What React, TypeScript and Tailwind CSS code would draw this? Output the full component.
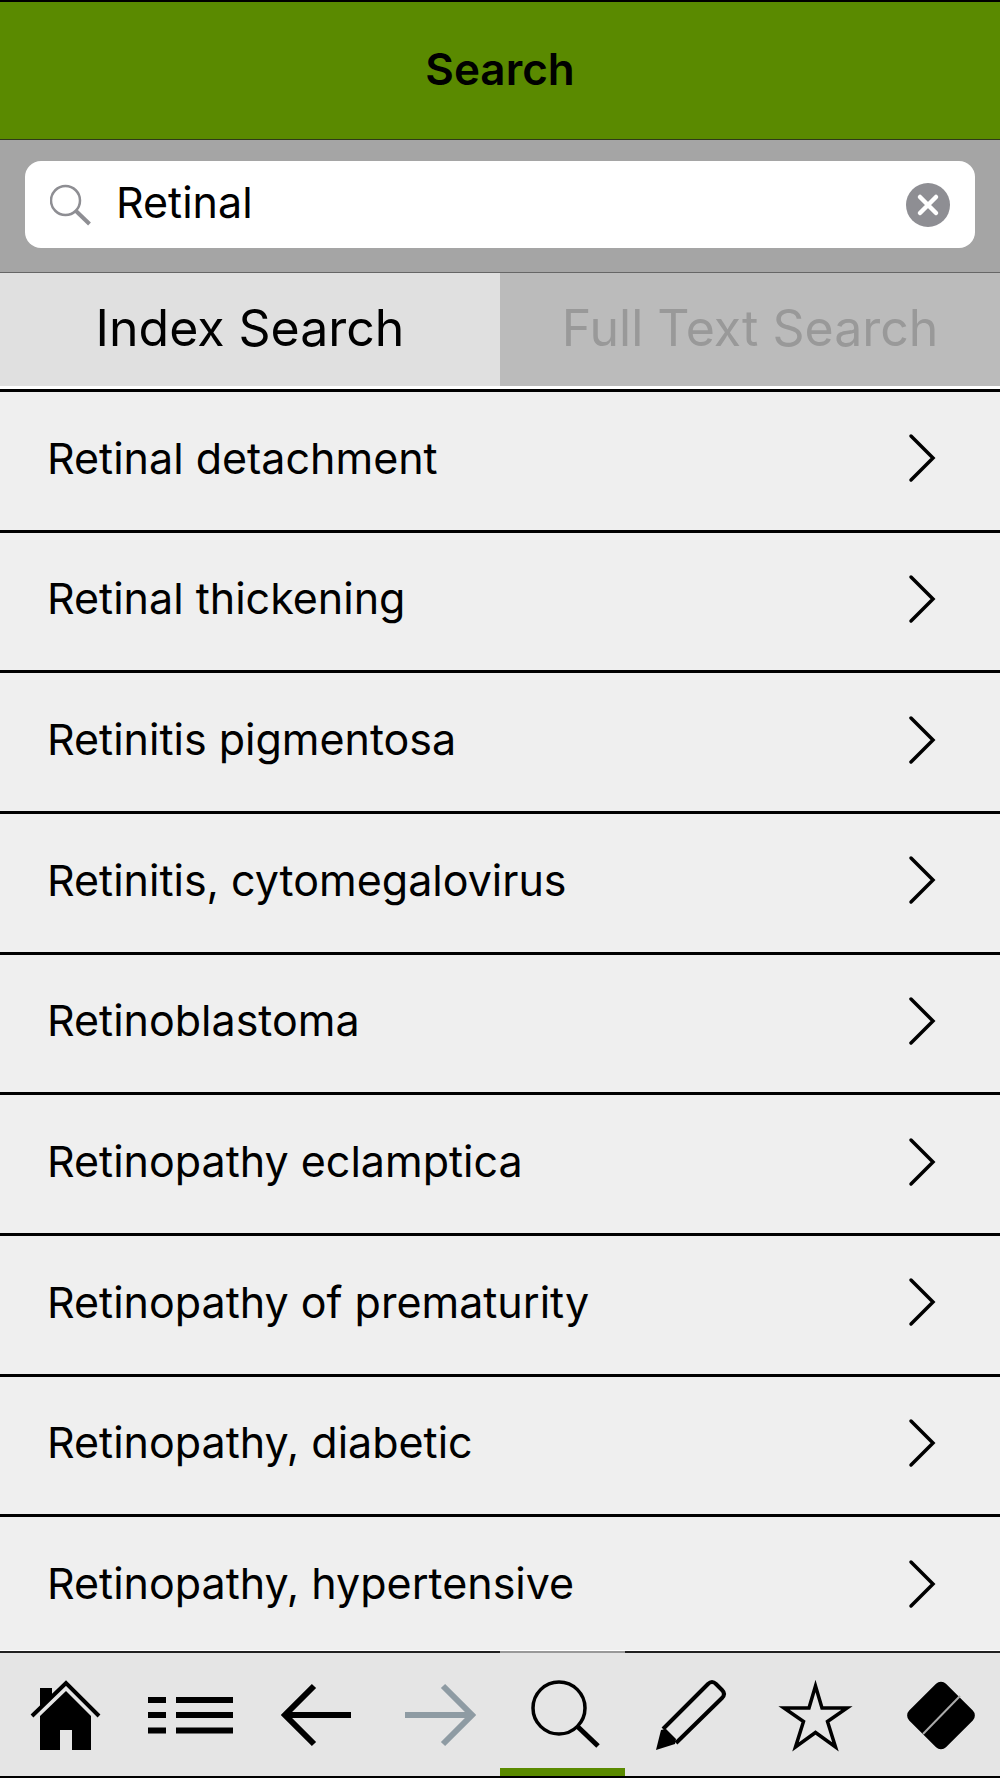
import { useState } from "react";
import type { ReactNode } from "react";

const results = [
  "Retinal detachment",
  "Retinal thickening",
  "Retinitis pigmentosa",
  "Retinitis, cytomegalovirus",
  "Retinoblastoma",
  "Retinopathy eclamptica",
  "Retinopathy of prematurity",
  "Retinopathy, diabetic",
  "Retinopathy, hypertensive"
];

type NavItem = { id: string; label: string; disabled?: boolean; icon: ReactNode };

// All nav icons are drawn on a 125x115 tile
const navItems: NavItem[] = [
  {
    id: "home",
    label: "Home",
    icon: (
      <>
        <path d="M40 35h12v7L40 54zM66 38l25 25v34H72V77H60v20H40V63z" fill="#000" />
        <path d="M32 63l34-33 33 33" stroke="#000" strokeWidth="4" />
      </>
    )
  },
  {
    id: "contents",
    label: "Contents",
    icon: <path d="M23 47h18M51 47h57M23 62h18M51 62h57M23 77.500h18M51 77.500h57" stroke="#000" strokeWidth="6" />
  },
  {
    id: "back",
    label: "Back",
    icon: <path d="M101 62H35M64 33L35 62l29 29" stroke="#000" strokeWidth="6" />
  },
  {
    id: "forward",
    label: "Forward",
    disabled: true,
    icon: <path d="M30 62h66M68 33l29 29-29 29" stroke="#8e9ba3" strokeWidth="6" />
  },
  {
    id: "search",
    label: "Search",
    icon: (
      <>
        <circle cx="59" cy="55" r="26" stroke="#000" strokeWidth="3.500" />
        <path d="M77 73l21 20" stroke="#000" strokeWidth="5" />
      </>
    )
  },
  {
    id: "notes",
    label: "Notes",
    icon: (
      <>
        <path d="M38 76L83 31q4-4 8 0l6 6q4 4 0 8L51 90" stroke="#000" strokeWidth="4" />
        <path d="M36 77l5-1 10 10-1 5-19 6z" fill="#000" />
      </>
    )
  },
  {
    id: "favorites",
    label: "Favorites",
    icon: (
      <path
        d="M65.500 33l6.500 22h25L77.500 68.500 85.500 94 65.500 79.500 45.500 94 53.500 68.500 34 55h25z"
        stroke="#000"
        strokeWidth="3.500"
      />
    )
  },
  {
    id: "erase",
    label: "Erase",
    icon: (
      <>
        <rect x="40" y="36.500" width="52" height="52" rx="7" transform="rotate(45 66 62.500)" fill="#000" />
        <path d="M85 43L48 81" stroke="#aaa" strokeWidth="2" />
      </>
    )
  }
];

function SearchField({ value, onChange }: { value: string; onChange: (value: string) => void }) {
  return (
    <div className="border-b border-[#666] bg-[#a5a5a5] px-[25px] pt-[21px] pb-6">
      <div className="flex h-[87px] items-center rounded-2xl bg-white px-[25px]">
        <svg viewBox="0 0 42 42" className="size-[42px] shrink-0" fill="none" stroke="#8e8e93" aria-hidden="true">
          <circle cx="15.500" cy="16.500" r="14.500" strokeWidth="2.500" />
          <path d="M26 27l13.500 13" strokeWidth="4" />
        </svg>
        <input
          type="text"
          aria-label="Search term"
          value={value}
          onChange={(event) => onChange(event.target.value)}
          className="ml-6 h-14 min-w-0 flex-1 bg-transparent pb-1 text-[43px] outline-none"
        />
        <button type="button" aria-label="Clear" onClick={() => onChange("")} className="shrink-0">
          <svg viewBox="0 0 44 44" className="size-11" fill="none" aria-hidden="true">
            <circle cx="22" cy="22" r="22" fill="#8e8e93" />
            <path d="M14 14l16 16M30 14L14 30" stroke="#fff" strokeWidth="4.500" strokeLinecap="round" />
          </svg>
        </button>
      </div>
    </div>
  );
}

export default function App() {
  const [term, setTerm] = useState("Retinal");
  const [mode, setMode] = useState("index");
  const [active, setActive] = useState("search");

  const modes = [
    ["index", "Index Search"],
    ["full", "Full Text Search"]
  ] as const;

  return (
    <div className="flex min-h-screen flex-col bg-white font-['Inter',sans-serif] text-black">
      <header className="flex h-[140px] items-center justify-center border-t-2 border-b border-t-black border-b-[#2f3a1a] bg-[#5a8a00] pb-1">
        <h1 className="text-[44px] leading-none font-semibold">Search</h1>
      </header>

      <SearchField value={term} onChange={setTerm} />

      <div className="mb-[3px] grid h-[113px] grid-cols-2">
        {modes.map(([id, label]) => (
          <button
            key={id}
            type="button"
            aria-pressed={mode === id}
            onClick={() => setMode(id)}
            className={mode === id ? "bg-[#e0e0e0] pb-0.5 text-[50px]" : "bg-[#bbb] pb-0.5 text-[50px] text-[#999]"}
          >
            {label}
          </button>
        ))}
      </div>

      <ul className="grid flex-1 auto-rows-fr">
        {results.map((result) => (
          <li key={result} className="border-t-3 border-black bg-[#efefef]">
            <a href="#" className="flex h-full min-h-[136px] items-center justify-between pr-16 pb-[5px] pl-[47px]">
              <span className="text-[43px] leading-none">{result}</span>
              <svg viewBox="0 0 28 50" className="h-[50px] w-7 shrink-0" fill="none" aria-hidden="true">
                <path d="M3 3l22 22L3 47" stroke="#000" strokeWidth="3.500" strokeLinecap="round" />
              </svg>
            </a>
          </li>
        ))}
      </ul>

      {/* the bar overlaps the end of the list */}
      <nav className="sticky bottom-0 -mt-[5px] grid h-[128px] grid-cols-8 border-t border-b-2 border-t-white border-b-black bg-[#e5e5e5]">
        {navItems.map((item) => (
          <button
            key={item.id}
            type="button"
            aria-label={item.label}
            disabled={item.disabled}
            onClick={() => setActive(item.id)}
            className={
              active === item.id
                ? "flex items-start justify-center border-t-2 border-b-8 border-t-[#999] border-b-[#5a8a00]"
                : "flex items-start justify-center border-t-2 border-t-[#222]"
            }
          >
            <svg viewBox="0 0 125 115" className="h-[115px] w-[125px] shrink-0" fill="none" aria-hidden="true">
              {item.icon}
            </svg>
          </button>
        ))}
      </nav>
    </div>
  );
}
